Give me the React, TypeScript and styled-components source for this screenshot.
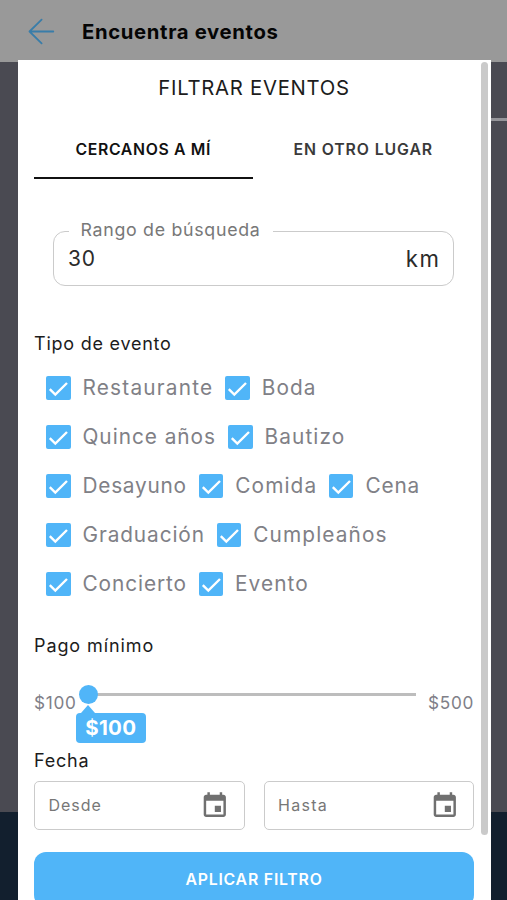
import React from 'react';
import styled, { createGlobalStyle } from 'styled-components';

const GlobalStyle = createGlobalStyle`
  *, *::before, *::after { box-sizing: border-box; }
  body { margin: 0; overflow: hidden; font-family: Inter, 'Open Sans', sans-serif; }
`;

const blue = '#50b5f8';

const Screen = styled.div`
  position: relative;
  width: 507px;
  height: 900px;
  overflow: hidden;
  display: flex;
  flex-direction: column;
  background: #4a4a52;
`;

const Header = styled.header`
  flex: 0 0 62px;
  display: flex;
  align-items: center;
  gap: 26px;
  padding: 2px 0 0 28px;
  background: #999;
`;

const Title = styled.h1`
  margin: 0;
  font-size: 20.3px;
  font-weight: 700;
  line-height: 28px;
  letter-spacing: 0.65px;
  color: #050505;
`;

const Backdrop = styled.div`
  flex: 1;
  padding: 56px 0 0 253px;
`;

const Divider = styled.div`
  height: 2.5px;
  background: #95959a;
`;

const BottomBar = styled.div`
  flex: 0 0 88.5px;
  background: #121f2e;
`;

const Dialog = styled.section`
  position: absolute;
  top: 60px;
  left: 17.5px;
  width: 473.2px;
  height: 840px;
  overflow: hidden;
  display: flex;
  flex-direction: column;
  padding: 14px 16.5px 0;
  background: #fff;

  & > * {
    flex-shrink: 0;
  }
`;

const Scrollbar = styled.div`
  position: absolute;
  top: 2px;
  right: 2.5px;
  width: 7.5px;
  height: 773px;
  border-radius: 4px;
  background: #cacaca;
`;

const DialogTitle = styled.h2`
  margin: 0;
  text-align: center;
  font-size: 20.3px;
  font-weight: 400;
  line-height: 28px;
  letter-spacing: 0.73px;
  color: #1c1c1c;
`;

const Tabs = styled.div`
  display: flex;
  margin-top: 18px;
`;

const Tab = styled.div<{ $active?: boolean }>`
  flex: 0 0 218.5px;
  height: 59px;
  line-height: 60px;
  text-align: center;
  font-size: 15.8px;
  font-weight: 600;
  letter-spacing: ${(p) => (p.$active ? '0.65px' : '0.9px')};
  padding-left: ${(p) => (p.$active ? '0' : '3px')};
  color: ${(p) => (p.$active ? '#111' : '#3a3a3a')};
  border-bottom: 2.5px solid ${(p) => (p.$active ? '#111' : 'transparent')};
`;

const RangeField = styled.div`
  position: relative;
  display: flex;
  align-items: center;
  justify-content: space-between;
  width: 401px;
  height: 55px;
  margin: 52px 0 0 19px;
  padding: 1px 14px 0;
  border: 1.5px solid #cbcbcb;
  border-radius: 12px;
  font-size: 21px;
  line-height: 28px;
  color: #2b2b2b;
`;

const RangeLabel = styled.span`
  position: absolute;
  top: -12px;
  left: 14.5px;
  width: 204px;
  height: 20px;
  overflow: hidden;
  padding-left: 12px;
  background: #fff;
  font-size: 17.8px;
  line-height: 20px;
  letter-spacing: 0.7px;
  white-space: nowrap;
  color: #787878;
`;

const Amount = styled.span`
  letter-spacing: 0.7px;
`;

const Unit = styled.span`
  font-size: 22.2px;
  letter-spacing: 1.7px;
  margin-right: -1.7px;
`;

const SectionTitle = styled.h3<{ $top: number; $spacing: number }>`
  margin: ${(p) => p.$top}px 0 0;
  font-size: 18px;
  font-weight: 400;
  line-height: 24px;
  letter-spacing: ${(p) => p.$spacing}px;
  color: #1c1c1c;
`;

const Options = styled.div`
  display: grid;
  grid-auto-rows: 49px;
  margin: 7.3px 0 0 12px;
`;

const OptionRow = styled.div`
  display: flex;
  align-items: center;
`;

const Option = styled.label<{ $width: number; $spacing: number }>`
  flex: 0 0 ${(p) => p.$width}px;
  display: flex;
  align-items: center;
  gap: 12px;
  font-size: 20.8px;
  line-height: 28px;
  letter-spacing: ${(p) => p.$spacing}px;
  white-space: nowrap;
  color: #808086;
`;

const Box = styled.span`
  flex: 0 0 24.5px;
  height: 24.5px;
  display: flex;
  border-radius: 2px;
  background: ${blue};
`;

const Slider = styled.div`
  display: flex;
  align-items: center;
  height: 30px;
  margin-top: 30px;
  font-size: 17.2px;
  color: #808088;
`;

const Limit = styled.span<{ $width: number }>`
  flex: 0 0 ${(p) => p.$width}px;
  letter-spacing: 0.7px;
`;

const Track = styled.div`
  position: relative;
  flex: 0 0 328px;
  height: 2.5px;
  margin: -17px 12px 0 0;
  background: #bdbdbd;
`;

const Thumb = styled.span`
  position: absolute;
  top: -8.5px;
  left: -9.5px;
  width: 19px;
  height: 19px;
  border-radius: 50%;
  background: ${blue};
`;

const Bubble = styled.span`
  position: absolute;
  top: 19.5px;
  left: -12.5px;
  width: 70.5px;
  height: 30.5px;
  border-radius: 4px;
  background: ${blue};
  text-align: center;
  font-size: 20.5px;
  font-weight: 700;
  line-height: 30px;
  letter-spacing: 0.3px;
  color: #fff;

  &::before {
    content: '';
    position: absolute;
    top: -7.5px;
    left: 5px;
    border: solid transparent;
    border-width: 0 7.5px 8px;
    border-bottom-color: ${blue};
  }
`;

const Dates = styled.div`
  display: grid;
  grid-template-columns: 210.5px 210.5px;
  gap: 19px;
  margin-top: 8px;
`;

const DateField = styled.div<{ $spacing: number }>`
  display: flex;
  align-items: center;
  justify-content: space-between;
  height: 49px;
  padding: 0 13.5px;
  border: 1.5px solid #cbcbcb;
  border-radius: 5px;
  font-size: 16px;
  letter-spacing: ${(p) => p.$spacing}px;
  color: #777;
`;

const Apply = styled.button`
  flex: 0 0 55px;
  width: 440px;
  margin-top: 22px;
  padding: 0;
  border: 0;
  border-radius: 12px;
  background: ${blue};
  font-family: inherit;
  font-size: 15.8px;
  font-weight: 600;
  letter-spacing: 0.8px;
  color: #fff;
`;

const BackArrow = () => (
  <svg width="28" height="28" viewBox="0 0 28 28" fill="none" stroke="#397da9" strokeWidth="1.8" strokeLinecap="round" strokeLinejoin="round">
    <path d="M25.3 13.5H1.5M13.6 1.7L1.5 13.5L13.6 25.3" />
  </svg>
);

const Check = () => (
  <svg width="24.5" height="24.5" viewBox="0 0 24.5 24.5" fill="none" stroke="#fff" strokeWidth="2.4">
    <path d="M3.8 13.2L9.3 18.6L21 7" />
  </svg>
);

const Calendar = () => (
  <svg width="29.6" height="29.6" viewBox="0 0 24 24" fill="#707070">
    <path d="M17 12h-5v5h5v-5zM16 1v2H8V1H6v2H5c-1.11 0-1.99.9-1.99 2L3 19c0 1.1.89 2 2 2h14c1.1 0 2-.9 2-2V5c0-1.1-.9-2-2-2h-1V1h-2zm3 18H5V8h14v11z" />
  </svg>
);

type EventType = { name: string; width: number; spacing: number };

const eventRows: EventType[][] = [
  [{ name: 'Restaurante', width: 179.2, spacing: 1.2 }, { name: 'Boda', width: 150, spacing: 1.1 }],
  [{ name: 'Quince años', width: 182, spacing: 0.97 }, { name: 'Bautizo', width: 150, spacing: 1.1 }],
  [
    { name: 'Desayuno', width: 152.8, spacing: 0.75 },
    { name: 'Comida', width: 130.2, spacing: 1.1 },
    { name: 'Cena', width: 100, spacing: 0.8 },
  ],
  [{ name: 'Graduación', width: 170.8, spacing: 0.9 }, { name: 'Cumpleaños', width: 180, spacing: 1.12 }],
  [{ name: 'Concierto', width: 152.5, spacing: 0.92 }, { name: 'Evento', width: 150, spacing: 1.1 }],
];

export default function App() {
  return (
    <Screen>
      <GlobalStyle />
      <Header>
        <BackArrow />
        <Title>Encuentra eventos</Title>
      </Header>
      <Backdrop>
        <Divider />
      </Backdrop>
      <BottomBar />
      <Dialog>
        <DialogTitle>FILTRAR EVENTOS</DialogTitle>
        <Tabs>
          <Tab $active>CERCANOS A MÍ</Tab>
          <Tab>EN OTRO LUGAR</Tab>
        </Tabs>
        <RangeField>
          <RangeLabel>Rango de búsqueda</RangeLabel>
          <Amount>30</Amount>
          <Unit>km</Unit>
        </RangeField>
        <SectionTitle $top={46} $spacing={0.76}>Tipo de evento</SectionTitle>
        <Options>
          {eventRows.map((row) => (
            <OptionRow key={row[0].name}>
              {row.map((type) => (
                <Option key={type.name} $width={type.width} $spacing={type.spacing}>
                  <Box>
                    <Check />
                  </Box>
                  {type.name}
                </Option>
              ))}
            </OptionRow>
          ))}
        </Options>
        <SectionTitle $top={25.7} $spacing={0.9}>Pago mínimo</SectionTitle>
        <Slider>
          <Limit $width={54}>$100</Limit>
          <Track>
            <Thumb />
            <Bubble>$100</Bubble>
          </Track>
          <Limit $width={46}>$500</Limit>
        </Slider>
        <SectionTitle $top={31} $spacing={0.8}>Fecha</SectionTitle>
        <Dates>
          <DateField $spacing={0.95}>
            Desde
            <Calendar />
          </DateField>
          <DateField $spacing={1.3}>
            Hasta
            <Calendar />
          </DateField>
        </Dates>
        <Apply>APLICAR FILTRO</Apply>
        <Scrollbar />
      </Dialog>
    </Screen>
  );
}
